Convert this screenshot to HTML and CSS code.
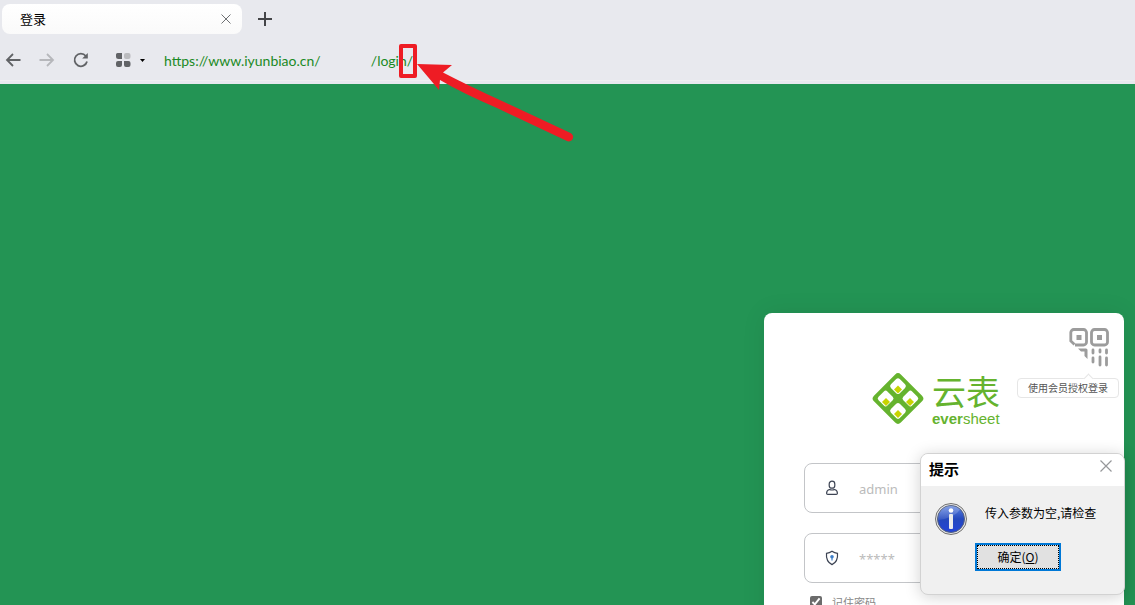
FILE: index.html
```html
<!DOCTYPE html>
<html lang="zh-CN">
<head>
<meta charset="utf-8">
<meta name="viewport" content="width=device-width, initial-scale=1">
<title>登录</title>
<link rel="stylesheet" href="styles.css">
</head>
<body>
<header class="browser">
  <div class="tabs">
    <div class="tab">
      <span class="tab-title">登录</span>
      <button class="icon-btn tab-close" type="button" aria-label="关闭标签">
        <svg width="10" height="10" viewBox="0 0 10 10"><path d="M.5.5l9 9M9.5.5l-9 9" stroke="#6e7073" fill="none"/></svg>
      </button>
    </div>
    <button class="icon-btn" type="button" aria-label="新标签">
      <svg width="14" height="14" viewBox="0 0 14 14"><path d="M7 0v14M0 7h14" stroke="#444548" stroke-width="2" fill="none"/></svg>
    </button>
  </div>
  <div class="toolbar">
    <nav class="nav" aria-label="导航">
      <button class="icon-btn" type="button" aria-label="后退">
        <svg width="16" height="16" viewBox="0 0 16 16"><path d="M15.500 8H2M8 2L2 8l6 6" stroke="#616366" stroke-width="1.800" fill="none"/></svg>
      </button>
      <button class="icon-btn" type="button" aria-label="前进" disabled>
        <svg width="16" height="16" viewBox="0 0 16 16"><path d="M.5 8H14M8 2l6 6-6 6" stroke="#b6b7bb" stroke-width="1.800" fill="none"/></svg>
      </button>
      <button class="icon-btn" type="button" aria-label="刷新">
        <svg width="16" height="16" viewBox="0 0 16 16"><path d="M14 9.500A6.300 6.300 0 1 1 12.800 4" stroke="#616366" stroke-width="1.800" fill="none"/><path d="M14.800 1v5.500H9.200z" fill="#616366"/></svg>
      </button>
    </nav>
    <button class="icon-btn apps" type="button" aria-label="应用">
      <svg width="30" height="16" viewBox="0 0 30 16"><path d="M2.500 1H7v6H3.500A2.500 2.500 0 0 1 1 4.500v-2A1.500 1.500 0 0 1 2.500 1zM1 11a2 2 0 0 1 2-2h4v4a2 2 0 0 1-2 2H3a2 2 0 0 1-2-2zM9 9h4.500a2 2 0 0 1 2 2v2a2 2 0 0 1-2 2H11a2 2 0 0 1-2-2z" fill="#616366"/><rect x="9" y="1" width="6.500" height="6" rx="2" fill="#bbbcbf"/><path d="M25 7h5l-2.500 3z" fill="#000"/></svg>
    </button>
    <input class="address" type="text" aria-label="地址" value="https://www.iyunbiao.cn/              /login/">
  </div>
</header>

<main class="page">
  <form class="card">
    <div class="qr">
      <button class="icon-btn" type="button" aria-label="二维码登录" aria-describedby="qr-tip">
        <svg width="40" height="40" viewBox="0 0 40 40" fill="none" stroke="#9c9c9c">
          <path d="M5.500 16.500L1.800 13V4.500a3 3 0 0 1 3-3h9.700a3 3 0 0 1 3 3v9.500a3 3 0 0 1-3 3H6" stroke-width="2.800"/>
          <rect x="22.500" y="1.500" width="16" height="15.500" rx="3" stroke-width="2.800"/>
          <path d="M7.500 7h5v5h-5zM28 7h5v5h-5z" fill="#9c9c9c" stroke="none"/>
          <path d="M9 20.500h8a1.500 1.500 0 0 1 1.500 1.500v9l-3-3v-4.500h-3.500z" fill="#9c9c9c" stroke="none"/>
          <path d="M24 22v3M31 22v2M37.500 22v3M24 30v4M31 29v8M37.500 30v7" stroke-width="2.800" stroke-linecap="round"/>
        </svg>
      </button>
      <span class="tip" id="qr-tip" role="tooltip">使用会员授权登录</span>
    </div>

    <div class="logo">
      <svg width="52" height="52" viewBox="0 0 52 52" aria-hidden="true">
        <g transform="rotate(45 26 25.500)">
          <rect x="7" y="6.500" width="38" height="38" rx="4" fill="#65b32e"/>
          <g fill="#fff"><rect x="11" y="10.500" width="12.500" height="12.500" rx="2.500"/><rect x="28.500" y="10.500" width="12.500" height="12.500" rx="2.500"/><rect x="11" y="28" width="12.500" height="12.500" rx="2.500"/><rect x="28.500" y="28" width="12.500" height="12.500" rx="2.500"/></g>
        </g>
        <path d="M26 12.500l4 4-4 4-4-4zM14 25l4 4-4 4-4-4zM38 25l4 4-4 4-4-4zM26 37l4 4-4 4-4-4z" fill="#c8d400"/>
      </svg>
      <div class="brand">
        <span class="brand-cn">云表</span>
        <span class="brand-en"><b>ever</b>sheet</span>
      </div>
    </div>

    <label class="field">
      <svg width="16" height="16" viewBox="0 0 16 16" fill="none" stroke="#3c4353" stroke-width="1.200"><rect x="5.200" y="1.200" width="5.600" height="7" rx="2.800"/><path d="M5.500 9.500C3.500 10 2.600 11.500 2.600 13.200q0 1.200 1.200 1.200h8.400q1.200 0 1.200-1.200C13.400 11.500 12.500 10 10.500 9.500q-2.500 1-5 0z"/></svg>
      <input type="text" placeholder="admin" aria-label="用户名">
    </label>
    <label class="field">
      <svg width="16" height="16" viewBox="0 0 16 16" fill="none"><path d="M8 1.200Q10.500 3 13.500 3.300C14 8.500 12.500 12.500 8 14.600 3.500 12.500 2 8.500 2.500 3.300Q5.500 3 8 1.200z" stroke="#3c4353" stroke-width="1.200"/><circle cx="8" cy="6.800" r="1.800" fill="#3f7fc8"/><path d="M8 7v3.500" stroke="#3f7fc8" stroke-width="1.200"/></svg>
      <input type="password" placeholder="*****" aria-label="密码">
    </label>
    <label class="remember"><input type="checkbox" checked>记住密码</label>
  </form>
</main>

<section class="dialog" role="alertdialog" aria-labelledby="dlg-title" aria-describedby="dlg-msg">
  <div class="dialog-head">
    <h2 id="dlg-title">提示</h2>
    <button class="icon-btn" type="button" aria-label="关闭">
      <svg width="12" height="12" viewBox="0 0 12 12"><path d="M.5.5l11 11M11.500.5l-11 11" stroke="#96979a" stroke-width="1.200" fill="none"/></svg>
    </button>
  </div>
  <div class="dialog-body">
    <svg width="32" height="32" viewBox="0 0 32 32" aria-hidden="true">
      <defs>
        <linearGradient id="blue" x1="0" y1="0" x2="0" y2="1"><stop offset="0" stop-color="#5c83e0"/><stop offset=".5" stop-color="#2448bd"/><stop offset="1" stop-color="#2344d8"/></linearGradient>
        <linearGradient id="shine" x1="0" y1="0" x2="0" y2="1"><stop offset="0" stop-color="#fff" stop-opacity=".25"/><stop offset="1" stop-color="#fff" stop-opacity=".1"/></linearGradient>
      </defs>
      <circle cx="16" cy="16" r="15.500" fill="#e6e6e6" stroke="#707070"/>
      <circle cx="16" cy="16" r="13.500" fill="url(#blue)" stroke="#55617f"/>
      <path d="M3 17a13 13 0 0 1 22-10.500Q20 15 3 17z" fill="url(#shine)"/>
      <circle cx="16" cy="7.500" r="2.300" fill="#fff"/>
      <rect x="14" y="11" width="4" height="15" rx="1" fill="#ececec"/>
    </svg>
    <p id="dlg-msg">传入参数为空,请检查</p>
  </div>
  <button class="ok" type="button"><span>确定(<u>O</u>)</span></button>
</section>

<div class="mark-box"></div>
<svg class="mark-arrow" width="158" height="80" viewBox="0 0 158 80" aria-hidden="true">
  <path d="M0 0L35 1 26 8.500Q52 22 85 37L153.500 69A4.300 4.300 0 0 1 150 77L80 44Q45 29 23 16L22 26z" fill="#ee1c24"/>
</svg>
</body>
</html>
```

FILE: styles.css
```css
* { box-sizing: border-box; }

html, body { height: 100%; }

body {
  margin: 0;
  display: flex;
  flex-direction: column;
  overflow: hidden;
  position: relative;
  font-family: "Noto Sans", "Noto Sans CJK SC", sans-serif;
  font-size: 12px;
  color: #000;
}

svg { display: block; flex: none; }

.icon-btn {
  display: flex;
  padding: 0;
  border: 0;
  background: none;
}

/* Browser chrome */
.browser {
  flex: none;
  height: 84px;
  padding-top: 4px;
  background: linear-gradient(#e8e9ee 80px, #efeff1 80px, #efeff1 81px, #e8e9ee 81px);
}

.tabs {
  display: flex;
  align-items: center;
  gap: 16px;
  padding-left: 2px;
}

.tab {
  display: flex;
  align-items: center;
  justify-content: space-between;
  width: 240px;
  height: 30px;
  padding: 0 11px 0 18px;
  border-radius: 8px;
  background: linear-gradient(#fff, #fafafa);
}

.tab-title {
  padding-bottom: 2px;
  font-family: "Noto Sans CJK SC", sans-serif;
  font-size: 13px;
}

.toolbar {
  display: flex;
  align-items: center;
  height: 52px;
  padding-left: 5px;
}

.nav { display: flex; gap: 18px; }

.apps { margin-left: 26px; }

.address {
  flex: 1;
  margin-left: 19px;
  padding: 0;
  border: 0;
  outline: 0;
  background: none;
  color: #1b8a25;
  font-family: Lato, sans-serif;
  font-size: 14px;
}

/* Login page */
.page {
  flex: 1;
  min-height: 0;
  display: flex;
  justify-content: flex-end;
  align-items: flex-start;
  padding: 229px 11px 0;
  background: #239454;
  overflow: hidden;
}

.card {
  width: 360px;
  padding: 15px 40px 40px;
  border-radius: 8px;
  background: #fff;
  box-shadow: 0 0 24px rgba(0, 0, 0, .08);
}

.qr {
  position: relative;
  width: 40px;
  margin: 0 -25px 5px auto;
}

.tip {
  position: absolute;
  top: 50px;
  right: -10px;
  padding: 0 10px;
  border: 1px solid #e6e6e6;
  border-radius: 4px;
  background: #fff;
  color: #555;
  font-family: "Noto Sans CJK SC", sans-serif;
  font-size: 10px;
  line-height: 18px;
  white-space: nowrap;
}

.tip::before {
  content: "";
  position: absolute;
  top: -4px;
  right: 26px;
  width: 6px;
  height: 6px;
  border: 1px solid #e6e6e6;
  border-width: 1px 0 0 1px;
  background: #fff;
  transform: rotate(45deg);
}

.logo {
  display: flex;
  gap: 8px;
  padding-left: 68px;
  height: 52px;
  margin-bottom: 38px;
  color: #65b32e;
}

.brand { display: flex; flex-direction: column; }

.brand-cn {
  font-family: "Noto Sans CJK SC", sans-serif;
  font-size: 34px;
  font-weight: 400;
  line-height: 36px;
}

.brand-en {
  font-family: "Liberation Sans", sans-serif;
  font-size: 15px;
  line-height: 20px;
}

.field {
  display: flex;
  align-items: center;
  height: 50px;
  margin-bottom: 20px;
  padding: 0 20px 0 19px;
  gap: 19px;
  border: 1px solid #c3c5c8;
  border-radius: 8px;
}

.field input {
  flex: 1;
  min-width: 0;
  padding: 2px 0 0;
  border: 0;
  outline: 0;
  background: none;
  font-family: "Noto Sans", sans-serif;
  font-size: 13px;
}

.field input::placeholder { color: #bbb; }

.remember {
  display: flex;
  align-items: center;
  gap: 10px;
  margin-top: -10px;
  padding-left: 6px;
  line-height: 18px;
  color: #888;
  font-family: "Noto Sans CJK SC", sans-serif;
  font-size: 11px;
}

.remember input {
  width: 12px;
  height: 12px;
  margin: 0;
  accent-color: #6b6b6b;
}

/* Alert dialog */
.dialog {
  position: absolute;
  right: 10px;
  bottom: 10px;
  width: 205px;
  padding-bottom: 23px;
  border: 1px solid #d2d2d2;
  border-radius: 8px;
  background: #f0f0f0;
  box-shadow: 0 2px 16px rgba(0, 0, 0, .18);
  overflow: hidden;
  font-family: "Noto Sans CJK SC", sans-serif;
}

.dialog-head {
  display: flex;
  justify-content: space-between;
  align-items: center;
  height: 32px;
  padding: 0 12px 8px 8px;
  background: #fff;
}

.dialog-head h2 {
  margin: 6px 0 0;
  font-size: 15px;
  line-height: 22px;
}

.dialog-body {
  display: flex;
  gap: 18px;
  padding: 17px 14px 8px;
}

.dialog-body p {
  margin: 0;
  line-height: 20px;
  white-space: nowrap;
}

.ok {
  display: block;
  width: 86px;
  height: 28px;
  margin-left: 54px;
  padding: 0;
  border: 2px solid #0078d7;
  background: #e1e1e1;
  color: #000;
  font-family: "Noto Sans CJK SC", sans-serif;
  font-size: 12px;
}

.ok span {
  display: block;
  height: 24px;
  border: 1px dotted #000;
  line-height: 21px;
}

/* Annotation */
.mark-box {
  position: absolute;
  top: 44px;
  left: 399px;
  width: 18px;
  height: 34px;
  border: 4px solid #ee1c24;
  border-radius: 2px;
}

.mark-arrow {
  position: absolute;
  top: 64px;
  left: 417px;
}
```
